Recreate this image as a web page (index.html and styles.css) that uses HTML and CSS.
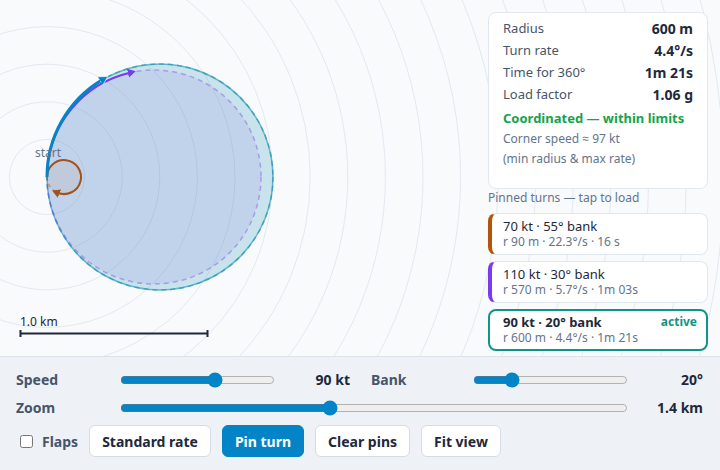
FILE: index.html
```html
<!DOCTYPE html>
<html lang="en">
<head>
    <meta charset="UTF-8">
    <meta name="viewport" content="width=device-width, initial-scale=1.0">
    <title>Turn radius</title>
    <link rel="stylesheet" href="styles.css">
</head>
<body>
    <div class="map">
        <svg class="map-svg" width="720" height="356" viewBox="0 0 720 356">
            <defs>
                <marker id="arrowBlue" markerUnits="userSpaceOnUse" markerWidth="12" markerHeight="12" refX="2" refY="5" orient="auto">
                    <path d="M0,0 L9,5 L0,10 z" fill="#0284c7" stroke="#fff" stroke-width="0.6"/>
                </marker>
                <marker id="arrowPurple" markerUnits="userSpaceOnUse" markerWidth="12" markerHeight="12" refX="2" refY="4.5" orient="auto">
                    <path d="M0,0 L8,4.5 L0,9 z" fill="#7c3aed"/>
                </marker>
                <marker id="arrowBrown" markerUnits="userSpaceOnUse" markerWidth="12" markerHeight="12" refX="2" refY="4.5" orient="auto">
                    <path d="M0,0 L8,4.5 L0,9 z" fill="#a0531d"/>
                </marker>
            </defs>

            <!-- range rings, 200 m apart -->
            <g class="rings" id="rings"></g>

            <!-- pinned + current turn circles -->
            <circle cx="160" cy="177" r="113" fill="rgba(2,132,199,0.10)" stroke="#0284c7" stroke-opacity="0.55" stroke-width="1.5"/>
            <circle cx="160" cy="177" r="113" fill="rgba(13,148,136,0.10)" stroke="#0d9488" stroke-opacity="0.5" stroke-width="1.5" stroke-dasharray="5 4"/>
            <circle cx="154" cy="177" r="107" fill="rgba(124,58,237,0.09)" stroke="#7c3aed" stroke-opacity="0.4" stroke-width="1.5" stroke-dasharray="5 4"/>
            <circle cx="64" cy="177" r="17" fill="rgba(180,83,9,0.07)" stroke="#b45309" stroke-opacity="0.45" stroke-width="1.5" stroke-dasharray="4 3"/>

            <!-- flown path, first seconds -->
            <path d="M47 177 A17 17 0 1 1 57.6 192.8" fill="none" stroke="#a0531d" stroke-width="2" marker-end="url(#arrowBrown)"/>
            <path d="M47 177 A107 107 0 0 1 129.9 72.7" fill="none" stroke="#7c3aed" stroke-width="2" marker-end="url(#arrowPurple)"/>
            <path d="M47 177 A113 113 0 0 1 101.8 80.1" fill="none" stroke="#0284c7" stroke-width="3" marker-end="url(#arrowBlue)"/>

            <text class="start-label" x="48" y="157" text-anchor="middle">start</text>

            <!-- scale bar -->
            <text class="scale-label" x="20" y="325.5">1.0 km</text>
            <g class="scale-bar">
                <line x1="20" y1="333.5" x2="208" y2="333.5"/>
                <line x1="20.5" y1="330" x2="20.5" y2="337"/>
                <line x1="207.5" y1="330" x2="207.5" y2="337"/>
            </g>
        </svg>

        <aside class="side">
            <div class="stats">
                <div class="stat"><span>Radius</span><b>600 m</b></div>
                <div class="stat"><span>Turn rate</span><b>4.4°/s</b></div>
                <div class="stat"><span>Time for 360°</span><b>1m 21s</b></div>
                <div class="stat"><span>Load factor</span><b>1.06 g</b></div>
                <div class="status">Coordinated — within limits</div>
                <div class="note">Corner speed ≈ 97 kt</div>
                <div class="note">(min radius &amp; max rate)</div>
            </div>

            <div class="pinned-title">Pinned turns — tap to load</div>
            <div class="pinned">
                <div class="pin pin-brown">
                    <div class="pin-title">70 kt · 55° bank</div>
                    <div class="pin-sub">r 90 m · 22.3°/s · 16 s</div>
                </div>
                <div class="pin pin-purple">
                    <div class="pin-title">110 kt · 30° bank</div>
                    <div class="pin-sub">r 570 m · 5.7°/s · 1m 03s</div>
                </div>
                <div class="pin pin-active">
                    <div class="pin-title"><span>90 kt · 20° bank</span><span class="active-tag">active</span></div>
                    <div class="pin-sub">r 600 m · 4.4°/s · 1m 21s</div>
                </div>
            </div>
        </aside>
    </div>

    <div class="controls">
        <div class="sliders">
            <label class="ctl-label" for="speed">Speed</label>
            <input type="range" id="speed" min="40" max="120" value="90">
            <span class="ctl-value">90 kt</span>
            <span></span>
            <label class="ctl-label" for="bank">Bank</label>
            <input type="range" id="bank" min="0" max="90" value="20">
            <span class="ctl-value">20°</span>

            <label class="ctl-label" for="zoom">Zoom</label>
            <input type="range" id="zoom" class="zoom-range" min="0" max="100" value="41">
            <span class="ctl-value">1.4 km</span>
        </div>
        <div class="actions">
            <label class="flaps"><input type="checkbox"> Flaps</label>
            <button>Standard rate</button>
            <button class="primary">Pin turn</button>
            <button>Clear pins</button>
            <button>Fit view</button>
        </div>
    </div>

    <script>
        // range rings every 200 m (37.6 px at this zoom)
        const rings = document.getElementById("rings");
        for (let i = 1; i <= 19; i++) {
            const c = document.createElementNS("http://www.w3.org/2000/svg", "circle");
            c.setAttribute("cx", 47);
            c.setAttribute("cy", 177);
            c.setAttribute("r", (i * 37.6).toFixed(1));
            rings.appendChild(c);
        }
    </script>
</body>
</html>
```

FILE: styles.css
```css
body {
    margin: 0;
    font-family: "Noto Sans", "Open Sans", sans-serif;
    color: #1e293b;
    background: #eef2f6;
}
.map {
    position: relative;
    height: 356px;
    background: #f8fafc;
    overflow: hidden;
}
.map-svg {
    display: block;
}
.rings circle {
    fill: none;
    stroke: #e4e8f0;
    stroke-width: 1;
}
.start-label {
    font-size: 12px;
    fill: #64748b;
}
.scale-label {
    font-size: 12px;
    fill: #1e293b;
}
.scale-bar line {
    stroke: #1e293b;
    stroke-width: 2;
}

.side {
    position: absolute;
    top: 12px;
    right: 12px;
    width: 220px;
    display: flex;
    flex-direction: column;
}
.stats {
    background: #fff;
    border: 1px solid #e2e8f0;
    border-radius: 8px;
    padding: 4px 14px 20px;
    height: 177px;
    box-sizing: border-box;
}
.stat {
    display: flex;
    justify-content: space-between;
    align-items: center;
    height: 22px;
    font-size: 13px;
    color: #475569;
}
.stat b {
    font-size: 14px;
    color: #1e293b;
}
.status {
    margin-top: 2px;
    height: 22px;
    line-height: 22px;
    font-size: 13px;
    font-weight: 700;
    color: #16a34a;
}
.note {
    height: 20px;
    line-height: 20px;
    font-size: 12px;
    color: #64748b;
}
.pinned-title {
    margin-top: 1px;
    line-height: 16px;
    font-size: 12px;
    color: #64748b;
}
.pinned {
    margin-top: 7px;
    display: flex;
    flex-direction: column;
    gap: 6px;
}
.pin {
    background: #fff;
    border: 1px solid #e2e8f0;
    border-left: 4px solid #b45309;
    border-radius: 8px;
    padding: 4px 10px 4px 11px;
    cursor: pointer;
}
.pin-purple {
    border-left-color: #7c3aed;
}
.pin-active {
    border: 2px solid #0f9488;
    padding: 3px 9px 3px 13px;
}
.pin-title {
    font-size: 13px;
    line-height: 16px;
    display: flex;
    justify-content: space-between;
}
.pin-active .pin-title {
    font-weight: 700;
}
.active-tag {
    font-size: 12px;
    color: #0f9488;
}
.pin-sub {
    font-size: 12px;
    line-height: 16px;
    color: #64748b;
}

.controls {
    border-top: 1px solid #dde3ea;
    padding: 13px 17px 13px 16px;
}
.sliders {
    display: grid;
    grid-template-columns: 96px 155px 67px 5px 94px 155px 67px;
    column-gap: 8px;
    row-gap: 8px;
    align-items: center;
}
.ctl-label {
    font-size: 14px;
    font-weight: 700;
    color: #475569;
    line-height: 20px;
}
.ctl-value {
    font-size: 14px;
    font-weight: 700;
    text-align: right;
    line-height: 20px;
}
input[type="range"] {
    margin: 0;
    width: 100%;
    accent-color: #0284c7;
}
.zoom-range {
    grid-column: 2 / 7;
}
.actions {
    margin-top: 7px;
    display: flex;
    align-items: center;
    gap: 11px;
}
.flaps {
    display: flex;
    align-items: center;
    gap: 6px;
    font-size: 14px;
    font-weight: 700;
    color: #475569;
}
.flaps input {
    margin: 3px 3px 3px 4px;
}
button {
    height: 32px;
    padding: 0 12px;
    border: 1px solid #d5dce5;
    border-radius: 6px;
    background: #fff;
    color: #1e293b;
    font-family: inherit;
    font-size: 14px;
    font-weight: 700;
    cursor: pointer;
}
button.primary {
    background: #0284c7;
    border-color: #0284c7;
    color: #fff;
}
```
